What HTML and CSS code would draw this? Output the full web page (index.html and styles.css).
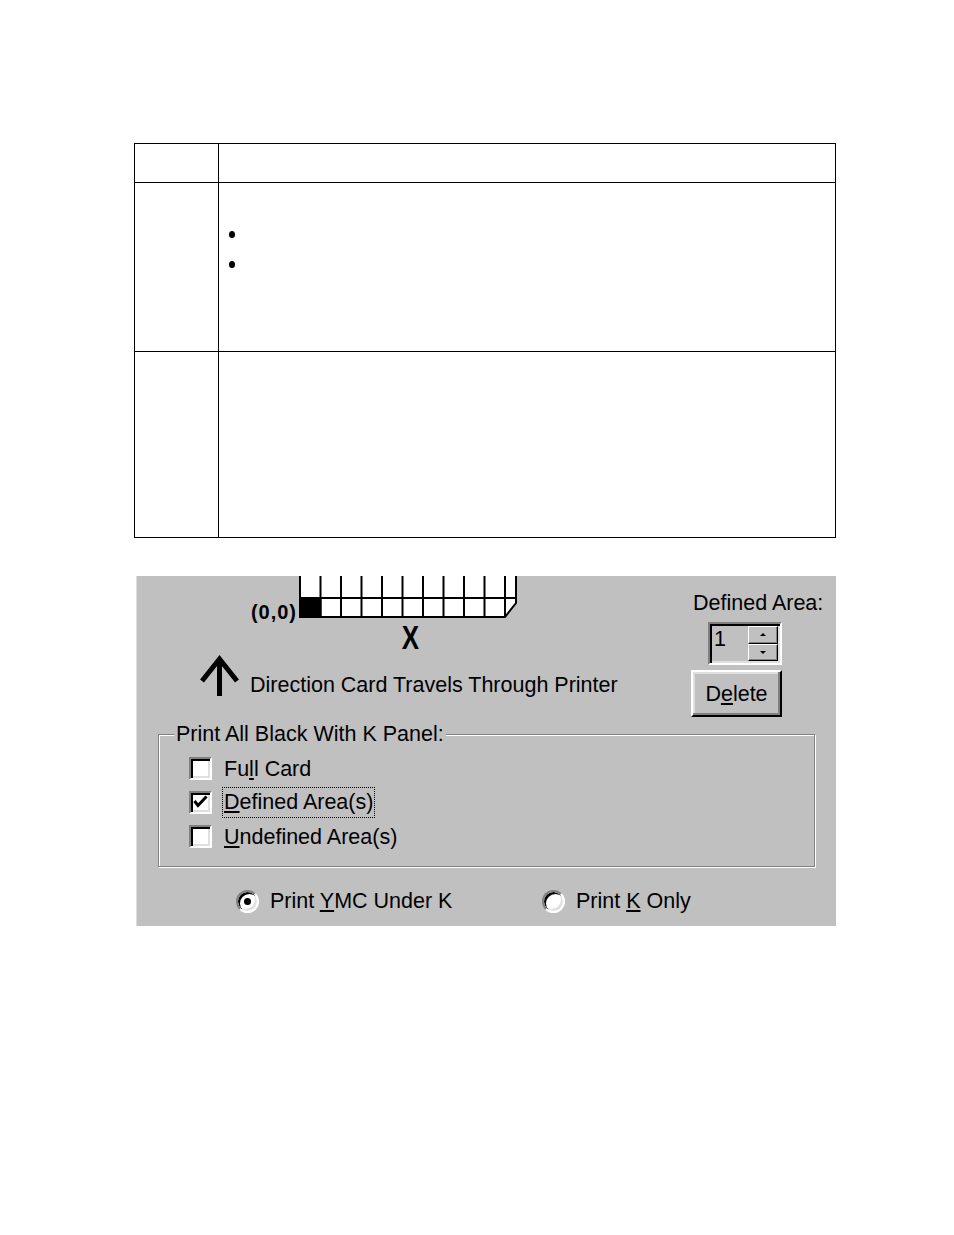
FILE: index.html
```html
<!DOCTYPE html>
<html>
<head>
<meta charset="utf-8">
<link rel="stylesheet" href="styles.css">
</head>
<body>
<table class="doc-table">
  <tr class="r1"><td class="col1"></td><td class="col2"></td></tr>
  <tr class="r2"><td class="col1"></td><td class="col2"><ul class="bullets"><li></li><li></li></ul></td></tr>
  <tr class="r3"><td class="col1"></td><td class="col2"></td></tr>
</table>

<div class="dialog">
  <div class="top">
    <div class="left">
      <div class="diagram">
        <span class="origin">(0,0)</span>
        <svg class="grid" width="219" height="42" viewBox="0 0 219 42">
          <path d="M1 0 H217 V27 L206 41 H1 Z" fill="#fff"/>
          <g stroke="#000" stroke-width="2" fill="none">
            <path d="M1 0 V41 H206 L217 27 V0"/>
            <path d="M1 22 H217"/>
            <path d="M21.5 0 V41 M42 0 V41 M62.5 0 V41 M83 0 V41 M103.5 0 V41 M124 0 V41 M144.5 0 V41 M165 0 V41 M185.5 0 V41 M206 0 V41"/>
          </g>
          <rect x="1" y="22" width="21" height="19" fill="#000"/>
          <rect x="0.5" y="21.5" width="22" height="20" fill="none" stroke="#000" stroke-width="1" stroke-dasharray="1 1"/>
        </svg>
      </div>
      <div class="axis-x">X</div>
      <div class="direction">
        <svg class="arrow" width="40" height="42" viewBox="0 0 40 42">
          <g stroke="#000" stroke-width="5" fill="none" stroke-linejoin="miter" stroke-miterlimit="10">
            <path d="M19.5 6 V42"/>
            <path d="M2 27 L19.5 5 L37 27"/>
          </g>
        </svg>
        <span class="direction-text">Direction Card Travels Through Printer</span>
      </div>
    </div>
    <div class="right">
      <span class="area-label">Defined Area:</span>
      <div class="spinner">
        <span class="spin-value">1</span>
        <span class="spin-buttons">
          <span class="spin-btn spin-up"></span>
          <span class="spin-btn spin-down"></span>
        </span>
      </div>
      <button class="btn" type="button">D<u>e</u>lete</button>
    </div>
  </div>

  <fieldset class="group">
    <legend>Print All Black With K Panel:</legend>
    <div class="check-row"><span class="checkbox"></span><span class="check-label">Fu<u>l</u>l Card</span></div>
    <div class="check-row"><span class="checkbox checked"><svg width="19" height="19" viewBox="0 0 19 19"><path d="M3.5 8 L7 12.5 L15.5 3.5" stroke="#000" stroke-width="3" fill="none"/></svg></span><span class="check-label focus"><u>D</u>efined Area(s)</span></div>
    <div class="check-row"><span class="checkbox"></span><span class="check-label"><u>U</u>ndefined Area(s)</span></div>
  </fieldset>

  <div class="radios">
    <div class="radio-item"><span class="radio selected"></span><span class="radio-label">Print <u>Y</u>MC Under K</span></div>
    <div class="radio-item"><span class="radio"></span><span class="radio-label">Print <u>K</u> Only</span></div>
  </div>
</div>
</body>
</html>
```

FILE: styles.css
```css
* { box-sizing: border-box; }
html, body { margin: 0; padding: 0; background: #fff; }
body { width: 954px; height: 1235px; font-family: "Liberation Sans", Arial, sans-serif; color: #000; }

.doc-table { border-collapse: collapse; table-layout: fixed; width: 702px; margin: 143px 0 0 134px; }
.doc-table td { border: 1px solid #000; padding: 0; vertical-align: top; }
.doc-table .col1 { width: 84px; }
.r1 td { height: 39px; }
.r2 td { height: 169px; }
.r3 td { height: 186px; }

.bullets { list-style: none; margin: 36px 0 0 0; padding: 0 0 0 10px; }
.bullets li { height: 30px; display: flex; align-items: center; }
.bullets li::before { content: ""; width: 6px; height: 7px; border-radius: 50%; background: #000; }

.dialog { width: 700px; height: 350px; margin: 38px 0 0 136px; background: #c0c0c0; overflow: hidden;
  font-size: 21.5px; line-height: 24px; box-shadow: inset 1px 0 0 #dcdcdc; }

.top { display: flex; height: 141px; }
.left { width: 555px; flex: none; }
.diagram { display: flex; align-items: flex-end; margin-left: 114px; height: 42px; }
.origin { width: 49px; padding-right: 2px; text-align: right; font-weight: bold; font-size: 20px; letter-spacing: 1px;
  line-height: 20px; margin-bottom: -4px; }
.grid { display: block; flex: none; }
.axis-x { width: 219px; margin: 1.6px 0 0 165px; text-align: center; font-weight: bold; font-size: 26px; line-height: 26px;
  transform: scaleY(1.3); transform-origin: top; }
.direction { display: flex; align-items: flex-start; margin: 8.4px 0 0 64px; }
.arrow { display: block; flex: none; }
.direction-text { margin: 19.5px 0 0 10px; white-space: nowrap; }

.right { display: flex; flex-direction: column; align-items: flex-start; padding-top: 14.5px; }
.area-label { margin-left: 2px; white-space: nowrap; }
.spinner { display: flex; margin: 7.5px 0 0 17px; width: 74px; height: 43px; padding: 2px;
  border: 2px solid; border-color: #808080 #fff #fff #808080;
  box-shadow: inset 2px 2px 0 #000, inset -2px -2px 0 #dfdfdf; }
.spin-value { flex: 1; padding: 0.5px 0 0 2px; }
.spin-buttons { display: flex; flex-direction: column; width: 30px; flex: none; }
.spin-btn { flex: 1; display: flex; align-items: center; justify-content: center; background: #c0c0c0;
  border: 1px solid; border-color: #fff #000 #000 #fff; box-shadow: inset -1px -1px 0 #808080; }
.spin-up::before { content: ""; border-left: 3px solid transparent; border-right: 3px solid transparent; border-bottom: 3px solid #000; }
.spin-down::before { content: ""; border-left: 3px solid transparent; border-right: 3px solid transparent; border-top: 3px solid #000; }

.btn { margin-top: 5px; width: 91px; height: 47px; padding: 0; background: #c0c0c0; color: #000;
  font: inherit; line-height: 24px; display: flex; align-items: center; justify-content: center;
  border: 2px solid; border-color: #fff #000 #000 #fff;
  box-shadow: inset -2px -2px 0 #808080, inset 2px 2px 0 #dfdfdf; }

.group { margin: 5px 0 0 22px; width: 657px; min-width: 0; padding: 5.5px 0 12.5px 30px;
  border: 1px solid #808080; box-shadow: 1px 1px 0 #fff, inset 1px 1px 0 #fff; }
.group legend { margin-left: -15px; padding: 0 2px; line-height: 24px; background: #c0c0c0; }
.check-row { display: flex; align-items: center; height: 34px; }
.checkbox { width: 23px; height: 23px; flex: none; background: #fff; display: flex; align-items: center; justify-content: center;
  border: 2px solid; border-color: #808080 #fff #fff #808080;
  box-shadow: inset 2px 2px 0 #000, inset -2px -2px 0 #dfdfdf; }
.checkbox svg { display: block; }
.check-label { margin-left: 11px; padding: 0 1px; white-space: nowrap; }
.focus { outline: 1px dotted #000; line-height: 29px; }

.radios { display: flex; align-items: center; height: 24px; margin-top: 22px; padding-left: 100px; }
.radio-item { display: flex; align-items: center; width: 306px; flex: none; }
.radio { position: relative; width: 23px; height: 23px; flex: none; border-radius: 50%; background: #fff;
  border: 2px solid; border-color: #808080 #fff #fff #808080;
  box-shadow: inset 2px 2px 0 #000, inset -2px -2px 0 #dfdfdf; }
.radio.selected::after { content: ""; position: absolute; left: 6px; top: 6px; width: 7px; height: 7px; border-radius: 50%; background: #000; }
.radio-label { margin-left: 11px; white-space: nowrap; }
```
